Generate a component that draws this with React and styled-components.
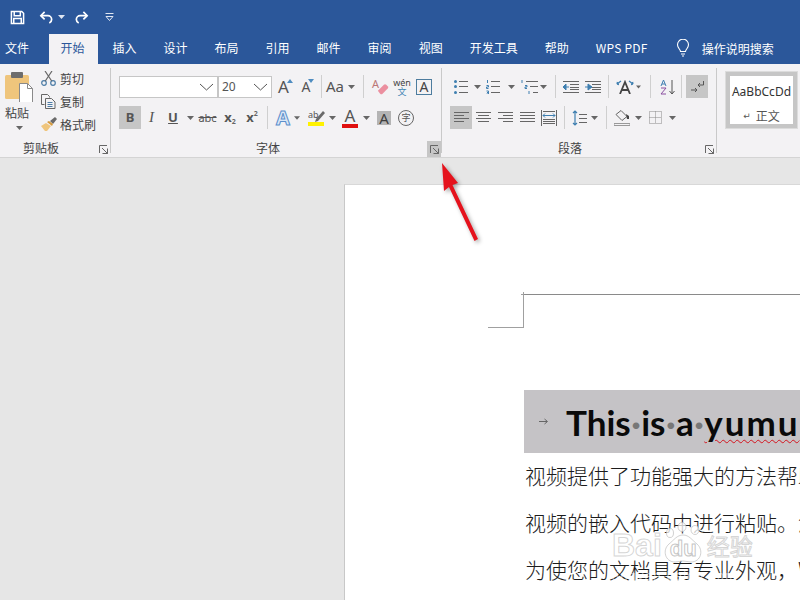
import React from "react";
import styled, { createGlobalStyle } from "styled-components";

const GlobalStyle = createGlobalStyle`
  html, body { margin: 0; padding: 0; background: #e6e6e6; }
  body { font-family: "Noto Sans CJK SC", "Noto Sans", sans-serif; }
`;

const Screen = styled.div`
  position: relative;
  width: 800px;
  height: 600px;
  overflow: hidden;
  display: flex;
  flex-direction: column;
`;

const TitleBar = styled.div`
  height: 34px;
  background: #2b579a;
  display: flex;
  align-items: center;
  padding-left: 9px;
`;

const Quick = styled.div`
  display: flex;
  align-items: center;
  justify-content: center;
  width: ${(p) => p.$w}px;
  margin-left: ${(p) => p.$ml || 0}px;
  flex-shrink: 0;
`;

const TabBar = styled.div`
  height: 30px;
  background: #2b579a;
  display: flex;
  gap: 2px;
  padding-left: 5px;
  white-space: nowrap;
`;

const Tab = styled.div`
  height: 30px;
  line-height: 28px;
  padding: 0 12.5px;
  font-size: 12px;
  flex-shrink: 0;
  color: #fff;
`;

const ActiveTab = styled(Tab)`
  padding: 0 13.5px 0 11.5px;
  color: #2b579a;
  background: #f3f2f4;
`;

const FileTab = styled(Tab)`
  padding: 0;
  margin-right: 18px;
`;

const PdfTab = styled(Tab)`
  letter-spacing: 0.25px;
  padding: 0 12px 0 12.5px;
`;

const Search = styled.div`
  display: flex;
  align-items: center;
  gap: 12px;
  margin-left: 14px;
  font-size: 12px;
  color: #fff;
  height: 28px;
`;

const Ribbon = styled.div`
  height: 93px;
  background: #f3f2f4;
  border-bottom: 1px solid #d4d4d4;
  display: flex;
  flex-shrink: 0;
`;

const Group = styled.div`
  width: ${(p) => p.$w}px;
  flex-shrink: 0;
  display: flex;
  flex-direction: column;
  padding-left: ${(p) => p.$pl || 0}px;
  box-sizing: border-box;
`;

const GroupLine = styled.div`
  width: 1px;
  margin: 4px 0;
  background: #c9c9c9;
  flex-shrink: 0;
`;

const Rows = styled.div`
  padding-top: 11px;
  display: flex;
  flex-direction: column;
  gap: 8px;
`;

const Row = styled.div`
  display: flex;
  height: 23px;
  align-items: center;
`;

const LabelRow = styled.div`
  position: relative;
  margin-top: auto;
  height: 20px;
  line-height: 21px;
  text-align: center;
  font-size: 12px;
  color: #444;
  margin-left: ${(p) => (p.$pl ? -p.$pl : 0)}px;
  padding-right: ${(p) => p.$pr}px;
`;

const Launcher = styled.div`
  position: absolute;
  right: 0;
  bottom: 0;
  width: 14px;
  height: 16px;
  display: flex;
  align-items: center;
  justify-content: center;
  background: ${(p) => (p.$hot ? "#c6c6c6" : "transparent")};
`;

const Tool = styled.div`
  position: relative;
  width: ${(p) => p.$w || 22}px;
  height: 23px;
  margin-left: ${(p) => p.$ml || 0}px;
  flex-shrink: 0;
  display: flex;
  align-items: center;
  justify-content: center;
  background: ${(p) => (p.$on ? "#c6c6c6" : "transparent")};
  color: #555;
`;

const Sep = styled.div`
  width: ${(p) => p.$w}px;
  height: 23px;
  flex-shrink: 0;
  display: flex;
  justify-content: center;
  &::after {
    content: "";
    width: 1px;
    background: #cfcfcf;
  }
`;

const Clipboard = styled.div`
  display: flex;
  padding: 8px 0 0 5px;
`;

const PasteBtn = styled.div`
  width: 28px;
  display: flex;
  flex-direction: column;
  align-items: center;
  font-size: 12px;
  color: #444;
  line-height: 17px;
`;

const PasteLabel = styled.span`
  margin-top: 2px;
  width: 24px;
  margin-left: -4px;
  margin-bottom: 5px;
`;

const ClipList = styled.div`
  margin-left: 8px;
  margin-top: -5px;
  display: flex;
  flex-direction: column;
`;

const ClipItem = styled.div`
  height: 23px;
  display: flex;
  align-items: center;
  font-size: 12px;
  color: #444;
`;

const ClipIcon = styled.span`
  width: 19px;
  display: flex;
`;

const FontBox = styled.div`
  width: ${(p) => p.$w}px;
  height: 22px;
  box-sizing: border-box;
  background: #fff;
  border: 1px solid #c6c6c6;
  display: flex;
  align-items: center;
  justify-content: space-between;
  padding: 0 3px;
  font-size: 12px;
  color: #555;
  font-family: "Noto Sans", sans-serif;
  flex-shrink: 0;
`;

const Letter = styled.span`
  font-family: ${(p) => (p.$serif ? '"Liberation Serif", serif' : '"Noto Sans", sans-serif')};
  font-size: ${(p) => p.$s || 13}px;
  font-weight: ${(p) => (p.$b ? 700 : 400)};
  font-style: ${(p) => (p.$i ? "italic" : "normal")};
  color: ${(p) => p.$c || "#555"};
  text-decoration: ${(p) => p.$d || "none"};
  line-height: 1;
`;

const EraserA = styled(Letter)`
  position: absolute;
  left: 3px;
  top: 3px;
`;

const Tiny = styled.sub`
  font-size: 7px;
  line-height: 0;
  vertical-align: ${(p) => (p.$up ? "6px" : "-2px")};
  font-family: "Noto Sans", sans-serif;
  font-weight: 700;
  color: #666;
`;

const EffectA = styled.span`
  font-family: "Noto Sans", sans-serif;
  font-size: 20px;
  font-weight: 700;
  line-height: 1;
  color: #dbe8f6;
  -webkit-text-stroke: 1px #5c90cc;
`;

const ColorStack = styled.div`
  display: flex;
  flex-direction: column;
  align-items: center;
  width: 16px;
`;

const ColorBar = styled.div`
  width: 16px;
  height: 4px;
  background: ${(p) => p.$c};
`;

const ShadedA = styled.span`
  width: 14px;
  height: 14px;
  background: #b4b4b4;
  color: #3f3f3f;
  font-family: "Noto Sans", sans-serif;
  font-size: 15px;
  line-height: 14px;
  text-align: center;
`;

const Circled = styled.span`
  width: 14px;
  height: 14px;
  border: 1px solid #666;
  border-radius: 50%;
  font-size: 9px;
  line-height: 14px;
  text-align: center;
  color: #555;
`;

const Wen = styled.div`
  display: flex;
  flex-direction: column;
  align-items: center;
  line-height: 9px;
  font-size: 9px;
  font-family: "Noto Sans", sans-serif;
  color: #444;
`;

const WenBlue = styled.span`
  font-family: "Noto Sans CJK SC", sans-serif;
  color: #3f86b5;
  font-size: 9px;
`;

const BoxA = styled.span`
  width: 14px;
  height: 14px;
  border: 1px solid #4d7c9e;
  font-family: "Noto Sans", sans-serif;
  font-size: 14px;
  line-height: 14px;
  text-align: center;
  color: #444;
`;

const Caret = styled.svg`
  position: absolute;
  right: ${(p) => p.$r}px;
  top: ${(p) => p.$t}px;
`;

const StyleGroup = styled.div`
  flex: 1;
  padding: 7px 0 0 8px;
`;

const Gallery = styled.div`
  width: 73px;
  height: 58px;
  box-sizing: border-box;
  border: 1px solid #dcdcdc;
`;

const StyleCard = styled.div`
  height: 100%;
  box-sizing: border-box;
  border: 4px solid #c6c6c6;
  background: #fff;
  display: flex;
  flex-direction: column;
  align-items: center;
  padding-top: 8px;
  color: #333;
`;

const StyleSample = styled.div`
  font-family: "Noto Sans", sans-serif;
  font-size: 12px;
  line-height: 16px;
  white-space: nowrap;
`;

const StyleName = styled.div`
  margin-top: 8px;
  font-size: 12px;
  line-height: 16px;
  color: #555;
  display: flex;
  align-items: center;
  gap: 5px;
`;

const ReturnMark = styled.span`
  font-size: 9px;
  line-height: 16px;
  font-family: "DejaVu Sans", sans-serif;
`;

const Workspace = styled.div`
  flex: 1;
  min-height: 0;
  background: #e6e6e6;
  padding: 26px 0 0 344px;
  display: flex;
`;

const Page = styled.div`
  flex: 1;
  background: #fff;
  border-left: 1px solid #c8c8c8;
  border-top: 1px solid #d8d8d8;
  overflow: hidden;
  padding-top: 109px;
`;

const HeaderMark = styled.div`
  position: relative;
  margin-left: 178px;
  height: 33px;
  border-top: 1px solid #8a8a8a;
  border-left: 1px solid #a0a0a0;
  &::before {
    content: "";
    position: absolute;
    left: -36px;
    bottom: 0;
    width: 36px;
    height: 1px;
    background: #a0a0a0;
  }
  &::after {
    content: "";
    position: absolute;
    left: -3px;
    top: -1px;
    width: 3px;
    height: 1px;
    background: #a0a0a0;
  }
`;

const MarkTick = styled.span`
  position: absolute;
  left: -1px;
  top: -3px;
  width: 1px;
  height: 2px;
  background: #a0a0a0;
`;

const Heading = styled.div`
  margin: 62px 0 -1px 179px;
  height: 63px;
  background: #c5c3c6;
  display: flex;
  align-items: center;
  white-space: nowrap;
`;

const TabMark = styled.span`
  width: 42px;
  padding-left: 15px;
  box-sizing: border-box;
  display: flex;
  flex-shrink: 0;
`;

const HeadingText = styled.span`
  font-family: Lato, "Noto Sans", sans-serif;
  font-weight: 700;
  font-size: 35px;
  color: #0a0a0a;
  line-height: 63px;
  margin-top: 2px;
`;

const Dot = styled.span`
  display: inline-block;
  width: 10.5px;
  text-align: center;
  color: #777;
  font-weight: 700;
`;

const Squiggle = styled.span`
  letter-spacing: 2px;
  padding-right: 6px;
  text-decoration: underline wavy #d4141f 1px;
  text-underline-offset: 3px;
`;

const Para = styled.p`
  margin: 0 0 0 180px;
  height: 47px;
  font-size: 21px;
  line-height: 47px;
  font-weight: 300;
  color: #1c1c1c;
  white-space: nowrap;
  font-family: "Noto Sans CJK SC", sans-serif;
`;

const Watermark = styled.div`
  position: absolute;
  left: 612px;
  top: 522px;
  display: flex;
  flex-direction: column;
`;

const WaterRow = styled.div`
  display: flex;
  align-items: center;
  height: 46px;
  font-family: "Liberation Sans", sans-serif;
  font-size: 32px;
  font-weight: 700;
  color: rgba(255, 255, 255, 0.8);
  -webkit-text-stroke: 1px rgba(185, 185, 185, 0.6);
  white-space: nowrap;
`;

const PawBox = styled.span`
  position: relative;
  width: 43px;
  height: 46px;
  display: flex;
`;

const PawText = styled.span`
  position: absolute;
  left: 8px;
  top: 13px;
  font-size: 22px;
  line-height: 28px;
  -webkit-text-stroke: 1px rgba(170, 170, 170, 0.7);
`;

const WaterCn = styled.span`
  font-family: "Noto Sans CJK SC", sans-serif;
  font-size: 23px;
  font-weight: 400;
  margin-left: 2px;
`;

const WaterSite = styled.div`
  font-family: "Liberation Sans", sans-serif;
  font-size: 13px;
  line-height: 16px;
  letter-spacing: 1.2px;
  color: rgba(255, 255, 255, 0.55);
  white-space: nowrap;
`;

const ArrowLayer = styled.svg`
  position: absolute;
  left: 430px;
  top: 155px;
  filter: drop-shadow(2px 2px 2px rgba(0, 0, 0, 0.35));
`;

const Down = ({ c = "#666" }) => (
  <svg width="7" height="4" viewBox="0 0 7 4"><path d="M0 0h7L3.5 4z" fill={c} /></svg>
);

const Chevron = () => (
  <svg width="15" height="8" viewBox="0 0 15 8"><path d="M1 1l6.5 6L14 1" fill="none" stroke="#555" /></svg>
);

const LauncherIcon = () => (
  <svg width="9" height="9" viewBox="0 0 9 9" fill="none" stroke="#666">
    <path d="M.5 8V.5H8M8.5 3.5v5h-5M3 3l5 5" />
    <path d="M5.5 8.5h3v-3" />
  </svg>
);

const Save = () => (
  <svg width="15" height="15" viewBox="0 0 16 16" fill="none" stroke="#fff" strokeWidth="1.6">
    <path d="M1.5 1.5h11l2 2v11h-13z" />
    <path d="M4.5 2v4h6.5V2M4 14.5V9h8v5.5" />
  </svg>
);

const Undo = ({ flip }) => (
  <svg width="15" height="15" viewBox="0 0 16 15" fill="none" stroke="#fff" strokeWidth="1.8" style={flip ? { transform: "scaleX(-1)" } : undefined}>
    <path d="M6 1.5L2 5.5l4 4" />
    <path d="M2 5.5h7.5a4 4 0 0 1 4 4c0 1.5-1 3-2.5 3.8" />
  </svg>
);

const Customize = () => (
  <svg width="9" height="8" viewBox="0 0 9 8" fill="none" stroke="#dfe6f2">
    <path d="M.5 .5h8M1 3.5h7L4.5 7.5z" />
  </svg>
);

const Bulb = () => (
  <svg width="14" height="18" viewBox="0 0 14 18" fill="none" stroke="#fff" strokeWidth="1.1">
    <path d="M4.5 12.5c0-2-3-3.5-3-6.8a5.5 5.5 0 0 1 11 0c0 3.300-3 4.800-3 6.800z" />
    <path d="M5 15h4M6 17h2" />
  </svg>
);

const Paste = () => (
  <svg width="28" height="30" viewBox="0 0 28 30">
    <rect x="0" y="3" width="24" height="24" rx="1.500" fill="#efc57c" />
    <rect x="6" y="0" width="12" height="6" rx="1" fill="#6d6d6d" />
    <path d="M14.500 11.500h8l5 5v15h-13z" fill="#fff" stroke="#8a8a8a" />
    <path d="M22.500 11.500v5h5" fill="none" stroke="#8a8a8a" />
  </svg>
);

const Scissors = () => (
  <svg width="15" height="15" viewBox="0 0 15 15" fill="none" stroke="#4c7ca6" strokeWidth="1.200">
    <circle cx="3" cy="12" r="2.300" />
    <circle cx="12" cy="12" r="2.300" />
    <path d="M4.300 10L11 0M10.700 10L4 0" stroke="#666" />
  </svg>
);

const Copy = () => (
  <svg width="15" height="15" viewBox="0 0 15 15" fill="none" stroke="#666">
    <path d="M.5 .5h6l2 2v1M.5 .5v10h3" />
    <path d="M4.500 4.500h6l3.500 3.500v6.500H4.500z" fill="#f3f2f4" />
    <path d="M6.500 8.500h5M6.500 10.500h5M6.500 12.500h5" stroke="#4c7ca6" />
  </svg>
);

const Brush = () => (
  <svg width="16" height="15" viewBox="0 0 16 15">
    <path d="M9 4L14 0l2 2-4 5z" fill="#6a6a6a" />
    <path d="M0 9l5-3 5 3-4 5H4z" fill="#efc57c" />
    <path d="M6 5l2-1 4 3-1 2z" fill="#d59a3c" />
  </svg>
);

const Pen = () => (
  <svg width="17" height="13" viewBox="0 0 17 13" style={{ marginBottom: -1 }}>
    <path d="M7 12l3-1L17 3l-2-2-7 8z" fill="#6a6a6a" />
    <text x="0" y="8" fontSize="9" fontFamily="Noto Sans" fill="#555">ab</text>
  </svg>
);

const Eraser = () => (
  <svg width="14" height="12" viewBox="0 0 16 14" style={{ position: "absolute", left: 7, top: 8 }}>
    <path d="M2 9l7-7a2 2 0 0 1 2.800 0l1.700 1.700a2 2 0 0 1 0 2.800l-6 6a2 2 0 0 1-2.800 0z" fill="#eb8f9f" />
  </svg>
);

const lineSet = (ys, x1, x2) => ys.map((y) => `M${x1} ${y}h${x2 - x1}`).join("");

const Bullets = () => (
  <svg width="14" height="14" viewBox="0 0 14 14">
    <path d={lineSet([1.500, 6.500, 12.500], 5, 14)} stroke="#666" />
    <circle cx="1.500" cy="1.500" r="1.500" fill="#3f7fb0" />
    <circle cx="1.500" cy="6.500" r="1.500" fill="#3f7fb0" />
    <circle cx="1.500" cy="12.500" r="1.500" fill="#3f7fb0" />
  </svg>
);

const Numbers = () => (
  <svg width="14" height="14" viewBox="0 0 14 14">
    <path d={lineSet([1.500, 6.500, 12.500], 5, 14)} stroke="#666" />
    <path d="M1.500 0v3M.5 5.500h2v1.500h-2v1.500h2M.5 11h2v3h-2M1 12.500h1.500" stroke="#3f7fb0" fill="none" />
  </svg>
);

const Multi = () => (
  <svg width="18" height="14" viewBox="0 0 18 14">
    <path d={lineSet([1.500], 6, 18)} stroke="#666" />
    <path d={lineSet([6.500], 10, 18)} stroke="#666" />
    <path d={lineSet([12.500], 13, 18)} stroke="#666" />
    <path d="M2 0v3M5 5.500h2v1.500H5v1.500h2M9 11v3" stroke="#3f7fb0" fill="none" />
  </svg>
);

const IndentDec = ({ rev }) => (
  <svg width="16" height="12" viewBox="0 0 16 12">
    <path d={lineSet([.5, 11.500], 0, 16) + lineSet([3.500, 6.500, 8.500], 7, 16)} stroke="#666" />
    {rev ? <path d="M0 6h3V3l4 3-4 3V6" fill="#3f7fb0" stroke="#3f7fb0" /> : <path d="M6 6H3V3L0 6l3 3V6" fill="#3f7fb0" stroke="#3f7fb0" />}
  </svg>
);

const Chinese = () => (
  <svg width="18" height="14" viewBox="0 0 18 14" fill="none">
    <path d="M4 14L9 2l5 12M6 10h6" stroke="#444" strokeWidth="1.800" />
    <path d="M1 4l4-3M1 4l2 .5M1 4l.5-2M17 4l-4-3M17 4l-2 .5M17 4l-.5-2" stroke="#3f7fb0" strokeWidth="1.300" />
  </svg>
);

const Sort = () => (
  <svg width="16" height="16" viewBox="0 0 16 16" fill="none">
    <path d="M1 7l2.500-6L6 7M2 5h3" stroke="#3f7fb0" />
    <path d="M1 9h5L1 15h5" stroke="#8a4fa0" />
    <path d="M12 1v14M9.500 12l2.500 3 2.500-3" stroke="#555" />
  </svg>
);

const Marks = () => (
  <svg width="14" height="14" viewBox="0 0 14 14" fill="none" stroke="#555">
    <path d="M13.500 1v4H8M10 3L8 5l2 2" />
    <path d="M1 10h6M5 8l2 2-2 2" />
  </svg>
);

const Align = ({ lines }) => (
  <svg width="15" height="11" viewBox="0 0 15 11">
    <path d={lines.map(([x, w], i) => `M${x} ${[.5, 3.500, 6.500, 9.500][i]}h${w}`).join("")} stroke="#666" />
  </svg>
);

const Distributed = () => (
  <svg width="16" height="16" viewBox="0 0 16 16" fill="none" stroke="#666">
    <path d="M.5 0v16M15.500 0v16M2 1.500h12M2 9.500h12M2 11.500h12M2 13.500h12" />
    <path d="M2 5.500h12M4 3.500L2 5.500l2 2M12 3.500l2 2-2 2" stroke="#3f7fb0" />
  </svg>
);

const LineSpacing = () => (
  <svg width="15" height="16" viewBox="0 0 15 16" fill="none">
    <path d="M3 1v14M1 3l2-2 2 2M1 13l2 2 2-2" stroke="#3f7fb0" strokeWidth="1.200" />
    <path d="M7 4.500h8M7 8.500h8M7 12.500h8" stroke="#666" />
  </svg>
);

const Shading = () => (
  <svg width="16" height="16" viewBox="0 0 16 16" fill="none">
    <path d="M7 .5l6 6-5 4-6-6z" stroke="#666" />
    <path d="M12 4l3 2v3h-2z" fill="#444" />
    <path d="M0 13.500h16v2H0z" stroke="#999" />
  </svg>
);

const Borders = () => (
  <svg width="13" height="13" viewBox="0 0 13 13" fill="none" stroke="#888" strokeDasharray="1 1">
    <path d="M.5 .5h12v12H.5zM6.500 .5v12M.5 6.500h12" />
  </svg>
);

const Arrow = () => (
  <svg width="9" height="7" viewBox="0 0 9 7" fill="none" stroke="#666"><path d="M0 3.500h8M5.500 1l3 2.500-3 2.500" /></svg>
);

const Paw = () => (
  <svg width="43" height="46" viewBox="0 0 43 46" fill="rgba(255,255,255,.75)" stroke="rgba(180,180,180,.6)">
    <ellipse cx="8" cy="11" rx="3.500" ry="4.500" />
    <ellipse cx="20" cy="5" rx="4" ry="4.500" />
    <ellipse cx="33" cy="8" rx="4" ry="4.500" />
    <path d="M21 13c-6 0-9 5-14 9-7 6-4 18 6 18 3 0 5-1 8-1s5 1 8 1c10 0 13-12 6-18-5-4-8-9-14-9z" />
  </svg>
);

function App() {
  const tabs = ["插入", "设计", "布局", "引用", "邮件", "审阅", "视图", "开发工具", "帮助"];

  return (
    <Screen>
      <GlobalStyle />
      <TitleBar>
        <Quick $w={16}><Save /></Quick>
        <Quick $w={16} $ml={13}><Undo /></Quick>
        <Quick $w={8} $ml={3}><Down c="#dfe6f2" /></Quick>
        <Quick $w={16} $ml={8}><Undo flip /></Quick>
        <Quick $w={9} $ml={16}><Customize /></Quick>
      </TitleBar>
      <TabBar>
        <FileTab>文件</FileTab>
        <ActiveTab>开始</ActiveTab>
        {tabs.map((t) => <Tab key={t}>{t}</Tab>)}
        <PdfTab>WPS PDF</PdfTab>
        <Search><Bulb />操作说明搜索</Search>
      </TabBar>

      <Ribbon>
        <Group $w={110}>
          <Clipboard>
            <PasteBtn>
              <Paste />
              <PasteLabel>粘贴</PasteLabel>
              <Down />
            </PasteBtn>
            <ClipList>
              <ClipItem><ClipIcon><Scissors /></ClipIcon>剪切</ClipItem>
              <ClipItem><ClipIcon><Copy /></ClipIcon>复制</ClipItem>
              <ClipItem><ClipIcon><Brush /></ClipIcon>格式刷</ClipItem>
            </ClipList>
          </Clipboard>
          <LabelRow $pr={28}>
            剪贴板
            <Launcher><LauncherIcon /></Launcher>
          </LabelRow>
        </Group>
        <GroupLine />

        <Group $w={330} $pl={8}>
          <Rows>
            <Row>
              <FontBox $w={99}><span /><Chevron /></FontBox>
              <FontBox $w={54}>20<Chevron /></FontBox>
              <Tool $w={23}>
                <Letter $s={17}>A</Letter>
                <Caret $r={2} $t={4} width="6" height="4"><path d="M3 0l3 4H0z" fill="#4f8cc0" /></Caret>
              </Tool>
              <Tool $w={22}>
                <Letter $s={14}>A</Letter>
                <Caret $r={3} $t={4} width="6" height="4"><path d="M0 0h6L3 4z" fill="#4f8cc0" /></Caret>
              </Tool>
              <Sep $w={8} />
              <Tool $w={20}><Letter $s={15}>Aa</Letter></Tool>
              <Tool $w={12}><Down /></Tool>
              <Sep $w={12} />
              <Tool $w={22}>
                <EraserA $s={11} $c="#b77">A</EraserA>
                <Eraser />
              </Tool>
              <Tool $w={22}>
                <Wen>wén<WenBlue>文</WenBlue></Wen>
              </Tool>
              <Tool $w={22}><BoxA>A</BoxA></Tool>
            </Row>
            <Row>
              <Tool $w={22} $on><Letter $b $s={13}>B</Letter></Tool>
              <Tool $w={21}><Letter $serif $i $s={15}>I</Letter></Tool>
              <Tool $w={22}><Letter $b $s={13} $d="underline">U</Letter></Tool>
              <Tool $w={12}><Down /></Tool>
              <Tool $w={23}><Letter $s={11} $d="line-through">abc</Letter></Tool>
              <Tool $w={22}><Letter $b $s={13}>x<Tiny>2</Tiny></Letter></Tool>
              <Tool $w={22}><Letter $b $s={13}>x<Tiny $up>2</Tiny></Letter></Tool>
              <Sep $w={9} />
              <Tool $w={22}><EffectA>A</EffectA></Tool>
              <Tool $w={6}><Down /></Tool>
              <Tool $w={22} $ml={5}>
                <ColorStack><Pen /><ColorBar $c="#fff200" /></ColorStack>
              </Tool>
              <Tool $w={10}><Down /></Tool>
              <Tool $w={22} $ml={2}>
                <ColorStack><Letter $s={17} $c="#555">A</Letter><ColorBar $c="#e01010" /></ColorStack>
              </Tool>
              <Tool $w={10}><Down /></Tool>
              <Tool $w={22} $ml={2}><ShadedA>A</ShadedA></Tool>
              <Tool $w={22}><Circled>字</Circled></Tool>
            </Row>
          </Rows>
          <LabelRow $pl={8} $pr={16}>
            字体
            <Launcher $hot><LauncherIcon /></Launcher>
          </LabelRow>
        </Group>
        <GroupLine />

        <Group $w={274} $pl={8}>
          <Rows>
            <Row>
              <Tool><Bullets /></Tool>
              <Tool $w={10}><Down /></Tool>
              <Tool><Numbers /></Tool>
              <Tool $w={10} $ml={2}><Down /></Tool>
              <Tool $w={18} $ml={4}><Multi /></Tool>
              <Tool $w={10}><Down /></Tool>
              <Sep $w={14} />
              <Tool $w={18}><IndentDec /></Tool>
              <Tool $w={18} $ml={4}><IndentDec rev /></Tool>
              <Sep $w={12} />
              <Tool><Chinese /></Tool>
              <Tool $w={5}><Down /></Tool>
              <Sep $w={18} />
              <Tool $w={18}><Sort /></Tool>
              <Sep $w={9} />
              <Tool $on><Marks /></Tool>
            </Row>
            <Row>
              <Tool $on><Align lines={[[0, 15], [0, 10], [0, 15], [0, 10]]} /></Tool>
              <Tool><Align lines={[[0, 15], [2, 11], [0, 15], [2, 11]]} /></Tool>
              <Tool><Align lines={[[0, 15], [5, 10], [0, 15], [5, 10]]} /></Tool>
              <Tool><Align lines={[[0, 15], [0, 15], [0, 15], [0, 15]]} /></Tool>
              <Tool><Distributed /></Tool>
              <Sep $w={8} />
              <Tool><LineSpacing /></Tool>
              <Tool $w={8}><Down /></Tool>
              <Sep $w={16} />
              <Tool $w={16}><Shading /></Tool>
              <Tool $w={16}><Down /></Tool>
              <Tool $w={18}><Borders /></Tool>
              <Tool $w={16}><Down /></Tool>
            </Row>
          </Rows>
          <LabelRow $pl={8} $pr={18}>
            段落
            <Launcher><LauncherIcon /></Launcher>
          </LabelRow>
        </Group>
        <GroupLine />

        <StyleGroup>
          <Gallery>
            <StyleCard>
              <StyleSample>AaBbCcDd</StyleSample>
              <StyleName><ReturnMark>↵</ReturnMark>正文</StyleName>
            </StyleCard>
          </Gallery>
        </StyleGroup>
      </Ribbon>

      <Workspace>
        <Page>
          <HeaderMark><MarkTick /></HeaderMark>
          <Heading>
            <TabMark><Arrow /></TabMark>
            <HeadingText>
              This<Dot>·</Dot>is<Dot>·</Dot>a<Dot>·</Dot><Squiggle>yumu</Squiggle>
            </HeadingText>
          </Heading>
          <Para>视频提供了功能强大的方法帮助您证明您的观点。</Para>
          <Para>视频的嵌入代码中进行粘贴。您也可以键入一个关键字</Para>
          <Para>为使您的文档具有专业外观，Word 提供了页眉</Para>
        </Page>
      </Workspace>

      <Watermark>
        <WaterRow>
          Bai
          <PawBox><Paw /><PawText>du</PawText></PawBox>
          <WaterCn>经验</WaterCn>
        </WaterRow>
        <WaterSite>jingyan.baidu.com</WaterSite>
      </Watermark>

      <ArrowLayer width="60" height="95" viewBox="0 0 60 95">
        <path d="M12 8L28 28 22.500 30 48 84 44.500 86 19 32 14 36z" fill="#e5121c" />
      </ArrowLayer>
    </Screen>
  );
}

export default App;
